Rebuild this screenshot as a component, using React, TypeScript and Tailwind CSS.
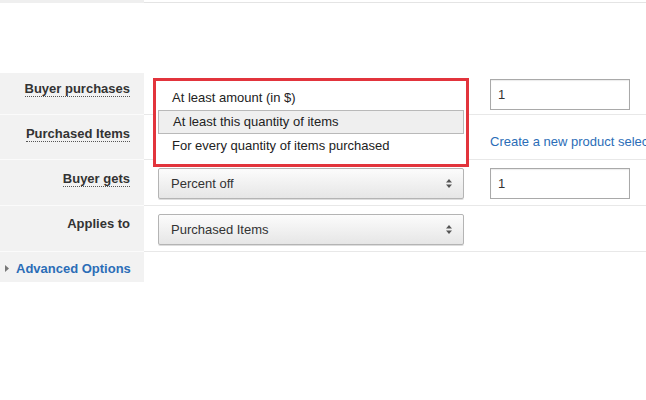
import { useState } from 'react';

const FONT = "font-['Liberation_Sans',Arial,sans-serif]";

function Label({ text, dotted = true, top = 'pt-[6px]' }: { text: string; dotted?: boolean; top?: string }) {
  return (
    <div className={`w-[144px] shrink-0 bg-[#f2f2f2] border-b border-[#fbfbfb] pr-[14px] ${top} text-right`}>
      <span
        className={`text-[13px] font-bold text-[#333] ${dotted ? 'border-b border-dotted border-[#555]' : ''}`}
      >
        {text}
      </span>
    </div>
  );
}

function Select({ value }: { value: string }) {
  return (
    <div className="w-[306px] h-[31px] flex items-center justify-between pl-[12px] pr-[8px] rounded-[2px] border border-[#b4b4b4] bg-gradient-to-b from-[#fcfcfc] to-[#e6e6e6] text-[13px] text-[#333] shadow-[0_1px_0_#ddd]">
      <span>{value}</span>
      <svg width="6" height="9" viewBox="0 0 6 9" className="mr-[3px]">
        <path d="M3 0 L6 3.5 H0 Z" fill="#555" />
        <path d="M3 9 L6 5.5 H0 Z" fill="#555" />
      </svg>
    </div>
  );
}

function NumberInput({ value }: { value: string }) {
  return (
    <div className="w-[140px] h-[31px] flex items-center pl-[7px] border border-[#a9a9a9] shadow-[inset_0_1px_1px_rgba(0,0,0,0.08)] bg-white text-[13px] text-[#333]">
      {value}
    </div>
  );
}

export default function App() {
  const [options] = useState([
    'At least amount (in $)',
    'At least this quantity of items',
    'For every quantity of items purchased',
  ]);
  const selected = 1;

  return (
    <div className={`${FONT} relative w-[646px] h-[400px] overflow-hidden bg-white whitespace-nowrap`}>
      {/* tail of previous row */}
      <div className="flex h-[3px]">
        <div className="w-[144px] bg-[#efefef]" />
        <div className="flex-1 border-b border-[#e4e4e4]" />
      </div>
      <div className="h-[70px]" />

      <div className="flex h-[42px]">
        <Label text="Buyer purchases" top="pt-[3px]" />
        <div className="flex-1 flex items-start pt-[6px] pl-[14px] gap-[26px] border-b border-[#e8e8e8]">
          {/* the select itself sits under the open list */}
          <Select value="" />
          <NumberInput value="1" />
        </div>
      </div>

      <div className="flex h-[45px]">
        <Label text="Purchased Items" />
        <div className="flex-1 flex items-start pt-[17px] pl-[346px] border-b border-[#e8e8e8]">
          <span className="text-[13px] text-[#2b6db7]">Create a new product selection</span>
        </div>
      </div>

      <div className="flex h-[46px]">
        <Label text="Buyer gets" />
        <div className="flex-1 flex items-start pt-[8px] pl-[14px] gap-[26px] border-b border-[#e8e8e8]">
          <Select value="Percent off" />
          <NumberInput value="1" />
        </div>
      </div>

      <div className="flex h-[46px]">
        <Label text="Applies to" dotted={false} top="pt-[5px]" />
        <div className="flex-1 flex items-start pt-[8px] pl-[14px] border-b border-[#e8e8e8]">
          <Select value="Purchased Items" />
        </div>
      </div>

      <div className="flex h-[30px]">
        <div className="w-[144px] bg-[#f2f2f2] flex items-center pl-[5px] pt-[3px] gap-[7px]">
          <svg width="4" height="7" viewBox="0 0 4 7">
            <path d="M0 0 L4 3.5 L0 7 Z" fill="#777" />
          </svg>
          <span className="text-[13px] font-bold text-[#2b6db7]">Advanced Options</span>
        </div>
      </div>

      {/* open dropdown, highlighted */}
      <div className="absolute left-[153px] top-[78px] w-[316px] h-[89px] border-[3px] border-[#e2343c] bg-white pt-[5px] px-[2px]">
        {options.map((opt, i) => (
          <div
            key={opt}
            className={`h-[24px] flex items-center pl-[14px] text-[13px] text-[#222] ${
              i === selected ? 'bg-[#efefef] border border-[#b9b9b9] pl-[13px]' : ''
            }`}
          >
            {opt}
          </div>
        ))}
      </div>
    </div>
  );
}
